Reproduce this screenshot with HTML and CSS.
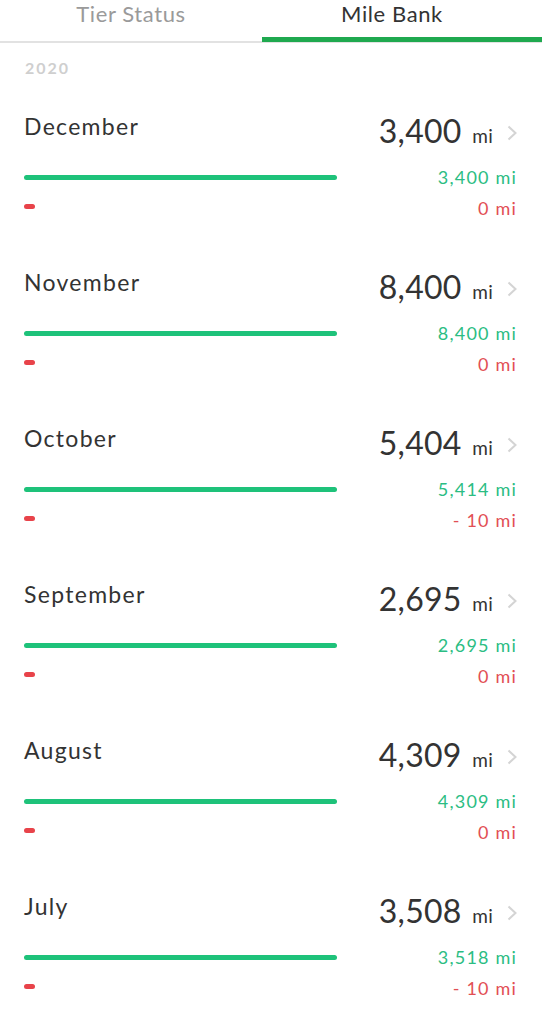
FILE: index.html
```html
<!DOCTYPE html>
<html>
<head>
  <title>Mile Bank</title>
  <link rel="stylesheet" href="styles.css">
</head>
<body>
  <div class="tabs">
    <div class="tab">Tier Status</div>
    <div class="tab tab-active">Mile Bank</div>
  </div>

  <div class="year">2020</div>

  <div class="month-list">
    <div class="month-row">
      <div class="month-head">
        <span class="month-name">December</span>
        <span class="month-total">3,400 <small>mi</small></span>
        <svg class="chevron" width="10" height="16" viewBox="0 0 10 16"><polyline points="1.5,1.5 8.5,8 1.5,14.5"/></svg>
      </div>
      <div class="month-line">
        <div class="bar-track"><div class="bar bar-earned" style="width: 100%"></div></div>
        <span class="earned">3,400 mi</span>
      </div>
      <div class="month-line">
        <div class="bar-track"><div class="bar bar-spent"></div></div>
        <span class="spent">0 mi</span>
      </div>
    </div>

    <div class="month-row">
      <div class="month-head">
        <span class="month-name">November</span>
        <span class="month-total">8,400 <small>mi</small></span>
        <svg class="chevron" width="10" height="16" viewBox="0 0 10 16"><polyline points="1.5,1.5 8.5,8 1.5,14.5"/></svg>
      </div>
      <div class="month-line">
        <div class="bar-track"><div class="bar bar-earned" style="width: 100%"></div></div>
        <span class="earned">8,400 mi</span>
      </div>
      <div class="month-line">
        <div class="bar-track"><div class="bar bar-spent"></div></div>
        <span class="spent">0 mi</span>
      </div>
    </div>

    <div class="month-row">
      <div class="month-head">
        <span class="month-name">October</span>
        <span class="month-total">5,404 <small>mi</small></span>
        <svg class="chevron" width="10" height="16" viewBox="0 0 10 16"><polyline points="1.5,1.5 8.5,8 1.5,14.5"/></svg>
      </div>
      <div class="month-line">
        <div class="bar-track"><div class="bar bar-earned" style="width: 100%"></div></div>
        <span class="earned">5,414 mi</span>
      </div>
      <div class="month-line">
        <div class="bar-track"><div class="bar bar-spent"></div></div>
        <span class="spent">- 10 mi</span>
      </div>
    </div>

    <div class="month-row">
      <div class="month-head">
        <span class="month-name">September</span>
        <span class="month-total">2,695 <small>mi</small></span>
        <svg class="chevron" width="10" height="16" viewBox="0 0 10 16"><polyline points="1.5,1.5 8.5,8 1.5,14.5"/></svg>
      </div>
      <div class="month-line">
        <div class="bar-track"><div class="bar bar-earned" style="width: 100%"></div></div>
        <span class="earned">2,695 mi</span>
      </div>
      <div class="month-line">
        <div class="bar-track"><div class="bar bar-spent"></div></div>
        <span class="spent">0 mi</span>
      </div>
    </div>

    <div class="month-row">
      <div class="month-head">
        <span class="month-name">August</span>
        <span class="month-total">4,309 <small>mi</small></span>
        <svg class="chevron" width="10" height="16" viewBox="0 0 10 16"><polyline points="1.5,1.5 8.5,8 1.5,14.5"/></svg>
      </div>
      <div class="month-line">
        <div class="bar-track"><div class="bar bar-earned" style="width: 100%"></div></div>
        <span class="earned">4,309 mi</span>
      </div>
      <div class="month-line">
        <div class="bar-track"><div class="bar bar-spent"></div></div>
        <span class="spent">0 mi</span>
      </div>
    </div>

    <div class="month-row">
      <div class="month-head">
        <span class="month-name">July</span>
        <span class="month-total">3,508 <small>mi</small></span>
        <svg class="chevron" width="10" height="16" viewBox="0 0 10 16"><polyline points="1.5,1.5 8.5,8 1.5,14.5"/></svg>
      </div>
      <div class="month-line">
        <div class="bar-track"><div class="bar bar-earned" style="width: 100%"></div></div>
        <span class="earned">3,518 mi</span>
      </div>
      <div class="month-line">
        <div class="bar-track"><div class="bar bar-spent"></div></div>
        <span class="spent">- 10 mi</span>
      </div>
    </div>
  </div>
</body>
</html>
```

FILE: styles.css
```css
body {
  margin: 0;
  font-family: Lato, "Open Sans", sans-serif;
  color: #333;
  background: #fff;
  overflow: hidden;
}

.tabs {
  display: flex;
  height: 41px;
  border-bottom: 2px solid #e2e2e2;
}

.tab {
  box-sizing: border-box;
  width: 262px;
  height: 42px;
  line-height: 28px;
  font-size: 22px;
  letter-spacing: 0.6px;
  text-align: center;
  color: #9a9a9a;
}

.tab-active {
  flex: 1;
  padding-right: 20px;
  color: #333;
  border-bottom: 5px solid #1fa94f;
}

.year {
  padding: 15px 25px 22px;
  line-height: 20px;
  font-size: 16px;
  font-weight: bold;
  letter-spacing: 2px;
  color: #cfcfcf;
}

.month-row {
  height: 156px;
  padding: 0 25px 0 24px;
}

.month-head {
  display: flex;
  align-items: center;
  height: 60px;
}

.month-name {
  flex: 1;
  margin-bottom: 8px;
  font-size: 23px;
  letter-spacing: 1.3px;
  color: #333;
}

.month-total {
  font-size: 32px;
  letter-spacing: 0.3px;
  color: #333;
}

.month-total small {
  margin-left: 2px;
  font-size: 19px;
}

.chevron {
  margin: 6px 0 0 14px;
  fill: none;
  stroke: #d4d4d4;
  stroke-width: 2;
}

.month-line {
  display: flex;
  align-items: center;
  justify-content: space-between;
  height: 24px;
  margin-top: 5px;
}

.bar-track {
  width: 313px;
}

.bar {
  height: 5px;
  border-radius: 3px;
}

.bar-earned {
  background: #1ec27a;
}

.bar-spent {
  width: 11px;
  background: #e8434a;
}

.earned,
.spent {
  font-size: 18px;
  letter-spacing: 1.2px;
}

.earned {
  color: #2bbd83;
}

.spent {
  margin-top: 4px;
  color: #e24f55;
}
```
